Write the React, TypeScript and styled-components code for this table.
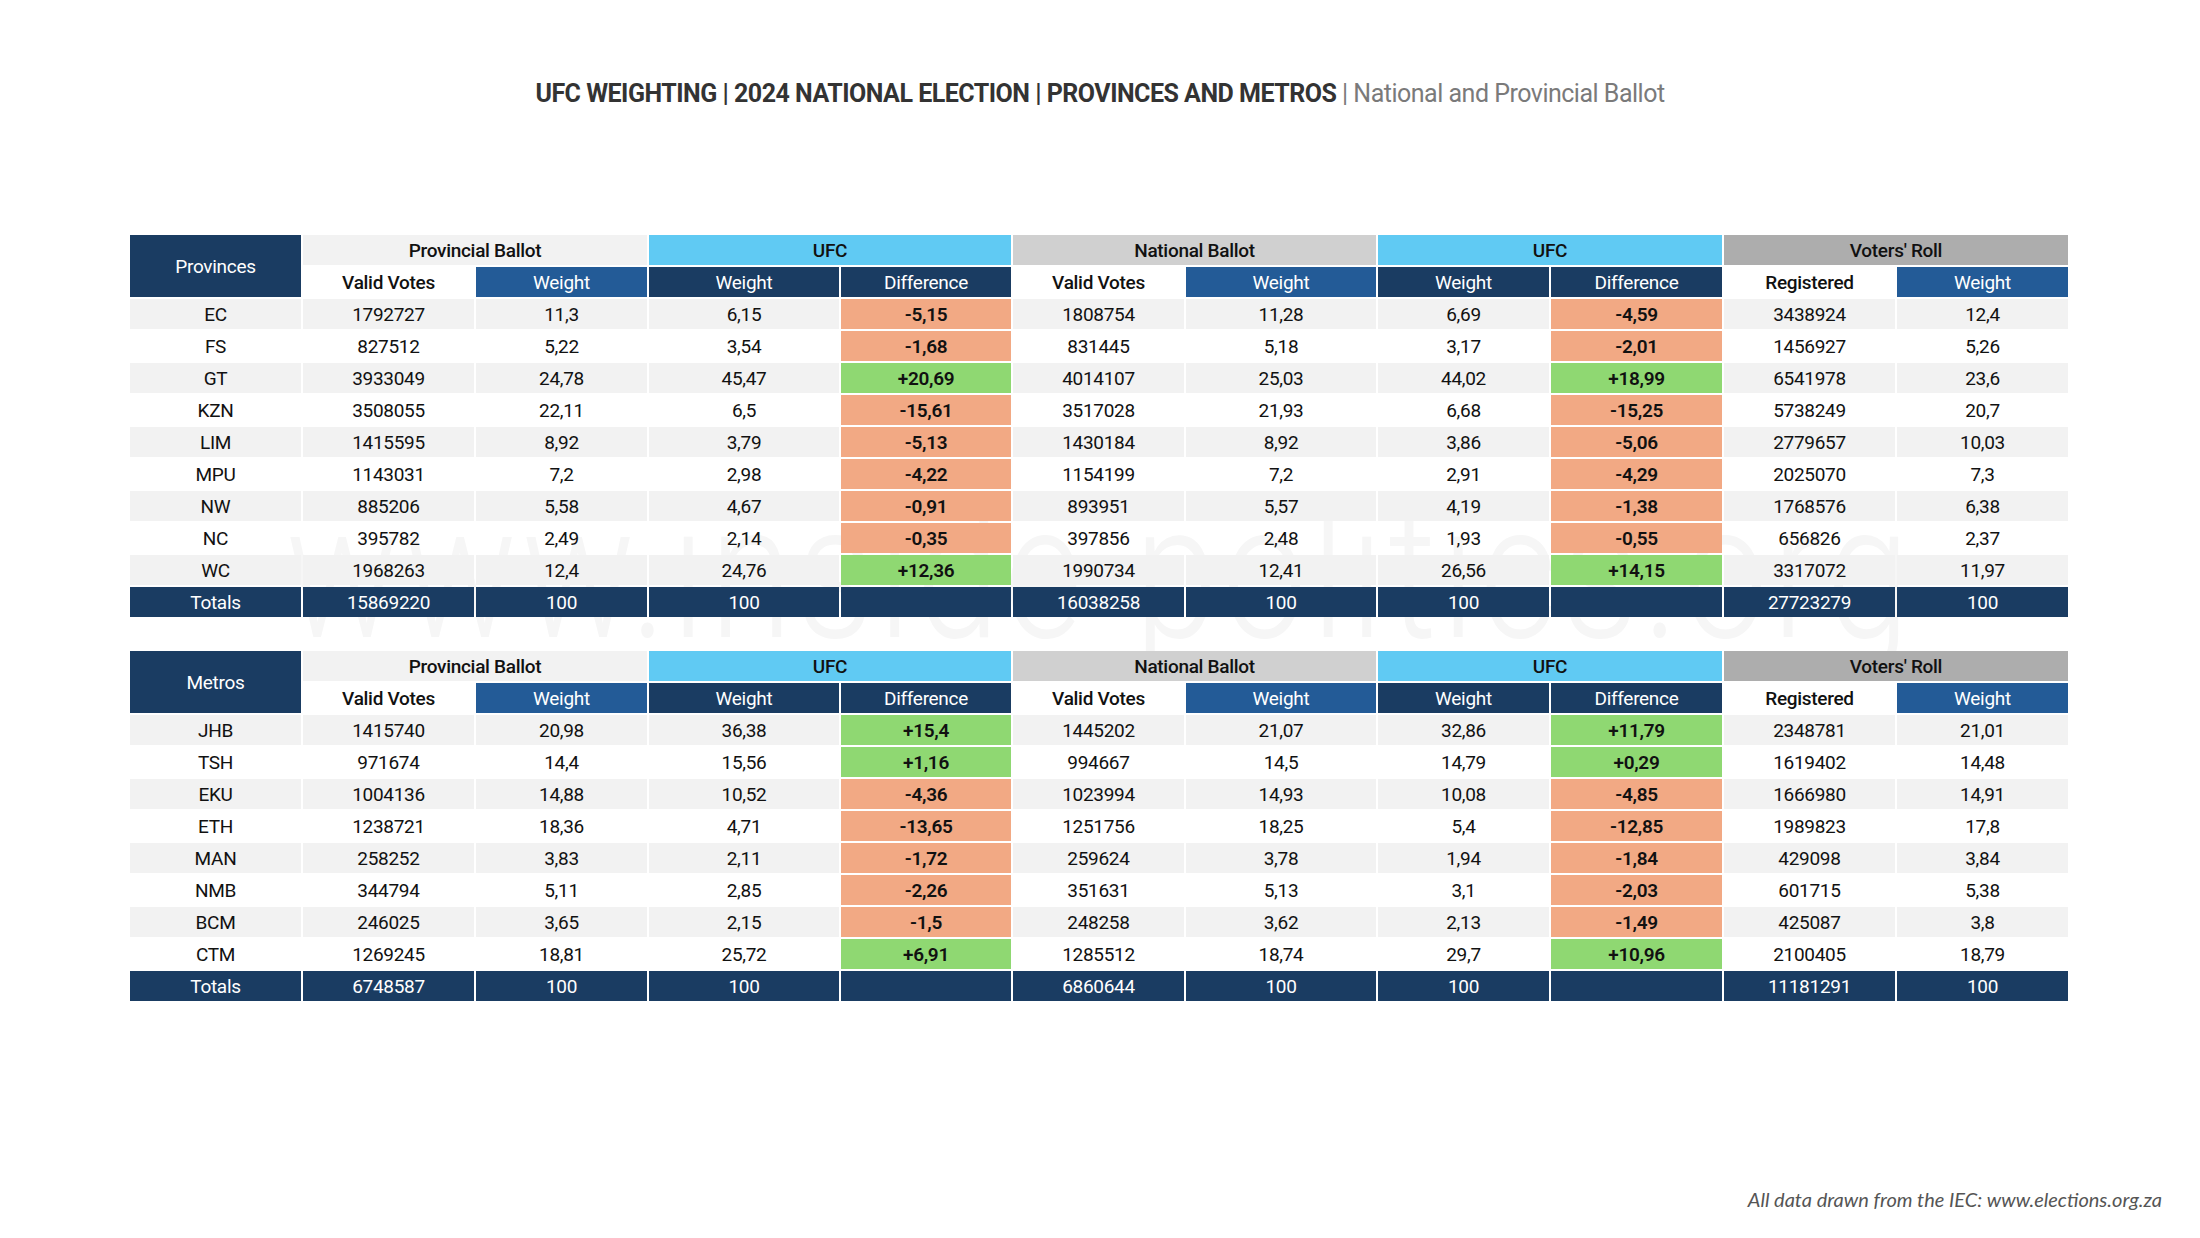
import React from "react";
import styled, { createGlobalStyle } from "styled-components";

const GlobalStyle = createGlobalStyle`
  html, body { margin: 0; padding: 0; background: #ffffff; }
  body { font-family: "Roboto", "Liberation Sans", sans-serif; }
`;

const NAVY = "#1a3c62";
const MID = "#235b97";
const CYAN = "#60caf3";
const SALMON = "#f2a984";
const GREEN = "#8fd872";
const STRIPE = "#f2f2f2";

const Page = styled.div`
  position: relative;
  width: 2200px;
  height: 1238px;
  overflow: hidden;
  display: flex;
  flex-direction: column;
`;

const Title = styled.h1`
  margin: 79px 0 0;
  height: 30px;
  line-height: 30px;
  text-align: center;
  font-family: "Roboto", "Liberation Sans", sans-serif;
  font-size: 25px;
  font-weight: 700;
  letter-spacing: -0.5px;
  color: #333333;
`;

const Sub = styled.span`
  font-weight: 400;
  color: #7a7a7a;
`;

const Watermark = styled.div`
  position: absolute;
  left: 0;
  top: 472px;
  width: 2200px;
  text-align: center;
  font-family: "Roboto", "Liberation Sans", sans-serif;
  font-weight: 300;
  font-size: 190px;
  line-height: 200px;
  letter-spacing: 6px;
  color: #f6f6f6;
  transform: scaleX(0.79);
  transform-origin: center;
  white-space: nowrap;
  z-index: 0;
  pointer-events: none;
`;

const Tables = styled.div`
  position: relative;
  z-index: 1;
  display: flex;
  flex-direction: column;
  gap: 34px;
  margin: 126px 0 0 130px;
`;

const Grid = styled.div`
  display: grid;
  grid-template-columns: 171px 171px 171px 190px 170px 171px 190px 171px 171px 171px 171px;
  grid-auto-rows: 30px;
  gap: 2px;
  width: fit-content;
`;

type CellProps = { $bg?: string; $color?: string; $weight?: number; $span?: number; $rows?: number };

const Cell = styled.div<CellProps>`
  display: flex;
  align-items: center;
  justify-content: center;
  background: ${(p) => p.$bg ?? "transparent"};
  color: ${(p) => p.$color ?? "#111111"};
  font-family: "Roboto", "Liberation Sans", sans-serif;
  font-size: 19px;
  font-weight: ${(p) => p.$weight ?? 400};
  letter-spacing: -0.3px;
  grid-column: span ${(p) => p.$span ?? 1};
  grid-row: span ${(p) => p.$rows ?? 1};
  white-space: nowrap;
`;

const Footer = styled.div`
  margin-top: auto;
  margin-bottom: 28px;
  padding-right: 38px;
  text-align: right;
  font-family: "Lato", "Liberation Sans", sans-serif;
  font-style: italic;
  font-size: 20px;
  line-height: 22px;
  color: #555555;
`;

type Row = string[];

const provinces: Row[] = [
  ["EC", "1792727", "11,3", "6,15", "-5,15", "1808754", "11,28", "6,69", "-4,59", "3438924", "12,4"],
  ["FS", "827512", "5,22", "3,54", "-1,68", "831445", "5,18", "3,17", "-2,01", "1456927", "5,26"],
  ["GT", "3933049", "24,78", "45,47", "+20,69", "4014107", "25,03", "44,02", "+18,99", "6541978", "23,6"],
  ["KZN", "3508055", "22,11", "6,5", "-15,61", "3517028", "21,93", "6,68", "-15,25", "5738249", "20,7"],
  ["LIM", "1415595", "8,92", "3,79", "-5,13", "1430184", "8,92", "3,86", "-5,06", "2779657", "10,03"],
  ["MPU", "1143031", "7,2", "2,98", "-4,22", "1154199", "7,2", "2,91", "-4,29", "2025070", "7,3"],
  ["NW", "885206", "5,58", "4,67", "-0,91", "893951", "5,57", "4,19", "-1,38", "1768576", "6,38"],
  ["NC", "395782", "2,49", "2,14", "-0,35", "397856", "2,48", "1,93", "-0,55", "656826", "2,37"],
  ["WC", "1968263", "12,4", "24,76", "+12,36", "1990734", "12,41", "26,56", "+14,15", "3317072", "11,97"],
];
const provTotals: Row = ["Totals", "15869220", "100", "100", "", "16038258", "100", "100", "", "27723279", "100"];

const metros: Row[] = [
  ["JHB", "1415740", "20,98", "36,38", "+15,4", "1445202", "21,07", "32,86", "+11,79", "2348781", "21,01"],
  ["TSH", "971674", "14,4", "15,56", "+1,16", "994667", "14,5", "14,79", "+0,29", "1619402", "14,48"],
  ["EKU", "1004136", "14,88", "10,52", "-4,36", "1023994", "14,93", "10,08", "-4,85", "1666980", "14,91"],
  ["ETH", "1238721", "18,36", "4,71", "-13,65", "1251756", "18,25", "5,4", "-12,85", "1989823", "17,8"],
  ["MAN", "258252", "3,83", "2,11", "-1,72", "259624", "3,78", "1,94", "-1,84", "429098", "3,84"],
  ["NMB", "344794", "5,11", "2,85", "-2,26", "351631", "5,13", "3,1", "-2,03", "601715", "5,38"],
  ["BCM", "246025", "3,65", "2,15", "-1,5", "248258", "3,62", "2,13", "-1,49", "425087", "3,8"],
  ["CTM", "1269245", "18,81", "25,72", "+6,91", "1285512", "18,74", "29,7", "+10,96", "2100405", "18,79"],
];
const metroTotals: Row = ["Totals", "6748587", "100", "100", "", "6860644", "100", "100", "", "11181291", "100"];

const subHeads: { label: string; bg?: string; color?: string; weight?: number }[] = [
  { label: "Valid Votes", weight: 500 },
  { label: "Weight", bg: MID, color: "#fff" },
  { label: "Weight", bg: NAVY, color: "#fff" },
  { label: "Difference", bg: NAVY, color: "#fff" },
  { label: "Valid Votes", weight: 500 },
  { label: "Weight", bg: MID, color: "#fff" },
  { label: "Weight", bg: NAVY, color: "#fff" },
  { label: "Difference", bg: NAVY, color: "#fff" },
  { label: "Registered", weight: 500 },
  { label: "Weight", bg: MID, color: "#fff" },
];

function DataTable({ label, rows, totals }: { label: string; rows: Row[]; totals: Row }) {
  return (
    <Grid>
      <Cell $bg={NAVY} $color="#fff" $rows={2}>{label}</Cell>
      <Cell $bg={STRIPE} $span={2} $weight={500}>Provincial Ballot</Cell>
      <Cell $bg={CYAN} $span={2} $weight={500}>UFC</Cell>
      <Cell $bg="#d0d0d0" $span={2} $weight={500}>National Ballot</Cell>
      <Cell $bg={CYAN} $span={2} $weight={500}>UFC</Cell>
      <Cell $bg="#adadad" $span={2} $weight={500}>Voters' Roll</Cell>
      {subHeads.map((h, i) => (
        <Cell key={i} $bg={h.bg} $color={h.color} $weight={h.weight}>{h.label}</Cell>
      ))}
      {rows.map((r, ri) =>
        r.map((v, ci) => {
          const isDiff = ci === 4 || ci === 8;
          const bg = isDiff ? (v.startsWith("+") ? GREEN : SALMON) : ri % 2 === 0 ? STRIPE : undefined;
          return (
            <Cell key={`${ri}-${ci}`} $bg={bg} $weight={isDiff ? 600 : 400}>
              {v}
            </Cell>
          );
        })
      )}
      {totals.map((v, ci) => (
        <Cell key={`t-${ci}`} $bg={NAVY} $color="#fff">{v}</Cell>
      ))}
    </Grid>
  );
}

export default function App() {
  return (
    <>
      <GlobalStyle />
      <Page>
        <Watermark>www.inside-politics.org</Watermark>
        <Title>
          UFC WEIGHTING | 2024 NATIONAL ELECTION | PROVINCES AND METROS <Sub>| National and Provincial Ballot</Sub>
        </Title>
        <Tables>
          <DataTable label="Provinces" rows={provinces} totals={provTotals} />
          <DataTable label="Metros" rows={metros} totals={metroTotals} />
        </Tables>
        <Footer>All data drawn from the IEC: www.elections.org.za</Footer>
      </Page>
    </>
  );
}
